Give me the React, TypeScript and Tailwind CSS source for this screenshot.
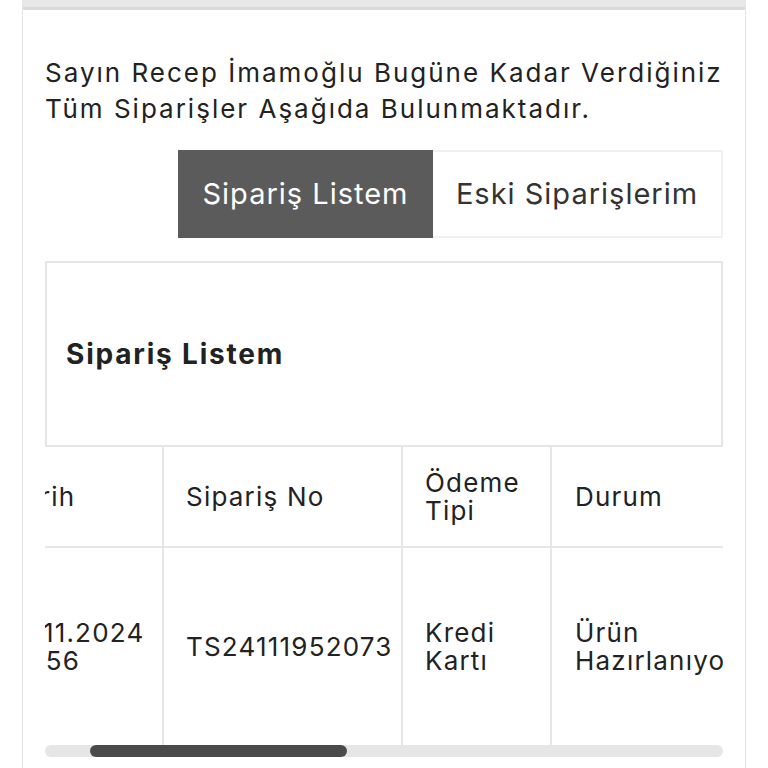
import React from 'react';

const font = { fontFamily: 'Inter, "Noto Sans", sans-serif' };

export default function App() {
  return (
    <div className="min-h-[768px] bg-white" style={font}>
      <div className="mx-[22px] border-x border-[#e6e6e6] min-h-[768px]">
        {/* top strip of the previous block */}
        <div className="h-[10px] bg-[#e8e8e8] border-b-[3px] border-[#d9d9d9]" />

        <div className="px-[22px]">
          <p className="mt-[45px] text-[26px] leading-[36px] text-[#222] tracking-[2px]">
            Sayın Recep İmamoğlu Bugüne Kadar Verdiğiniz Tüm Siparişler Aşağıda Bulunmaktadır.
          </p>

          {/* tabs */}
          <div className="mt-[23px] flex justify-end">
            <div className="flex h-[88px]">
              <button className="w-[255px] bg-[#5b5b5b] text-[29px] tracking-[1px] text-white">
                Sipariş Listem
              </button>
              <button className="w-[290px] border-2 border-l-0 border-[#f0f0f0] text-[29px] tracking-[1px] text-[#333]">
                Eski Siparişlerim
              </button>
            </div>
          </div>

          {/* list box */}
          <div className="mt-[23px] border-2 border-[#e6e6e6]">
            <div className="flex h-[182px] items-center px-[19px]">
              <h2 className="text-[28px] font-bold tracking-[1.8px] text-[#222]">Sipariş Listem</h2>
            </div>
          </div>

          {/* table, scrolled horizontally */}
          <div className="overflow-hidden">
            <table className="-ml-[52px] w-[1018px] table-fixed border-collapse text-[26px] tracking-[1.2px] text-[#222]">
              <colgroup>
                <col className="w-[170px]" />
                <col className="w-[239px]" />
                <col className="w-[149px]" />
                <col className="w-[240px]" />
                <col className="w-[220px]" />
              </colgroup>
              <thead>
                <tr className="h-[100px]">
                  <th className="border-b-2 border-r-2 border-[#e6e6e6] pl-[15px] text-left font-normal">
                    Tarih
                  </th>
                  <th className="border-b-2 border-r-2 border-[#e6e6e6] pl-[22px] text-left font-normal">
                    Sipariş No
                  </th>
                  <th className="border-b-2 border-r-2 border-[#e6e6e6] pl-[22px] text-left font-normal leading-[28px]">
                    Ödeme<br />Tipi
                  </th>
                  <th className="border-b-2 border-r-2 border-[#e6e6e6] pl-[23px] text-left font-normal">
                    Durum
                  </th>
                  <th className="border-b-2 border-r-2 border-[#e6e6e6] pl-[23px] text-left font-normal">
                    Tutar
                  </th>
                </tr>
              </thead>
              <tbody>
                <tr className="h-[198px]">
                  <td className="border-r-2 border-[#e6e6e6] pl-[15px] leading-[28px] whitespace-nowrap">
                    19.11.2024<br />13:56
                  </td>
                  <td className="border-r-2 border-[#e6e6e6] pl-[22px] whitespace-nowrap">TS24111952073</td>
                  <td className="border-r-2 border-[#e6e6e6] pl-[22px] leading-[28px]">
                    Kredi<br />Kartı
                  </td>
                  <td className="border-r-2 border-[#e6e6e6] pl-[23px] leading-[28px] whitespace-nowrap">
                    Ürün<br />Hazırlanıyor
                  </td>
                  <td className="border-r-2 border-[#e6e6e6] pl-[23px] whitespace-nowrap">649,90 TL</td>
                </tr>
              </tbody>
            </table>
          </div>

          {/* scrollbar */}
          <div className="h-[12px] rounded-full bg-[#e6e6e6]">
            <div className="ml-[45px] h-[12px] w-[257px] rounded-full bg-[#4a4a4a]" />
          </div>
        </div>
      </div>
    </div>
  );
}
